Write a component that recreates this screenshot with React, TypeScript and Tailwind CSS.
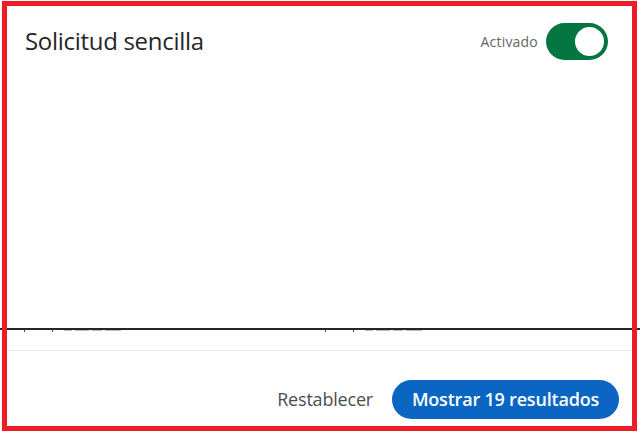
import { useState } from 'react';

export default function App() {
  const [enabled, setEnabled] = useState(true);

  return (
    <div className="relative w-[640px] h-[434px] bg-white overflow-hidden" style={{ fontFamily: '"Open Sans", "Noto Sans", sans-serif' }}>
      {/* Header */}
      <header className="flex items-center justify-between pl-[25px] pr-[32px] pt-[20px] h-[62px]">
        <h2 className="text-[24px] text-[#262626] tracking-[-0.3px]">Solicitud sencilla</h2>
        <div className="flex items-center gap-[8px]">
          <span className="text-[14px] text-[#666666] tracking-[0.2px]">Activado</span>
          <button
            onClick={() => setEnabled(!enabled)}
            className={`w-[62px] h-[37px] rounded-full flex items-center px-[2px] ${enabled ? 'bg-[#057642] justify-end' : 'bg-gray-400 justify-start'}`}
          >
            <span className="w-[33px] h-[33px] rounded-full bg-white border-[2px] border-[#057642]" />
          </button>
        </div>
      </header>

      {/* Content (scrolled) */}
      <div className="h-[266px]" />
      <div className="h-[2px] bg-[#262626]" />
      <div className="h-[20px] flex">
        <div className="w-[320px] flex items-start pl-[24px] gap-[27px]">
          <span className="w-px h-[2px] bg-[#444]" />
          <div className="flex gap-[3px]">
            <span className="w-px h-[2px] bg-[#444]" />
            <span className="w-[8px] h-[1px] bg-[#bbb] ml-[8px]" />
            <span className="w-[14px] h-[1px] bg-[#bbb]" />
            <span className="w-[10px] h-[1px] bg-[#bbb]" />
            <span className="w-[16px] h-[1px] bg-[#bbb]" />
          </div>
        </div>
        <div className="w-[320px] flex items-start pl-[5px] gap-[27px]">
          <span className="w-px h-[2px] bg-[#444]" />
          <div className="flex gap-[3px]">
            <span className="w-px h-[2px] bg-[#444]" />
            <span className="w-[8px] h-[1px] bg-[#bbb] ml-[8px]" />
            <span className="w-[14px] h-[1px] bg-[#bbb]" />
            <span className="w-[10px] h-[1px] bg-[#bbb]" />
            <span className="w-[16px] h-[1px] bg-[#bbb]" />
          </div>
        </div>
      </div>

      {/* Footer */}
      <footer className="mx-[7px] border-t border-[#e8e8e8] flex items-center justify-end gap-[19px] pr-[14px] pt-[29px]">
        <button className="text-[18px] font-medium text-[#4d4d4d] tracking-[-0.2px]">Restablecer</button>
        <button className="h-[39px] px-[20px] rounded-full bg-[#0a66c2] text-white text-[18px] font-semibold tracking-[-0.2px]">
          Mostrar 19 resultados
        </button>
      </footer>

      {/* Annotation frame */}
      <div className="absolute left-[2px] top-[1px] w-[635px] h-[430px] border-[5px] border-[#ed1c24] pointer-events-none" />
    </div>
  );
}
